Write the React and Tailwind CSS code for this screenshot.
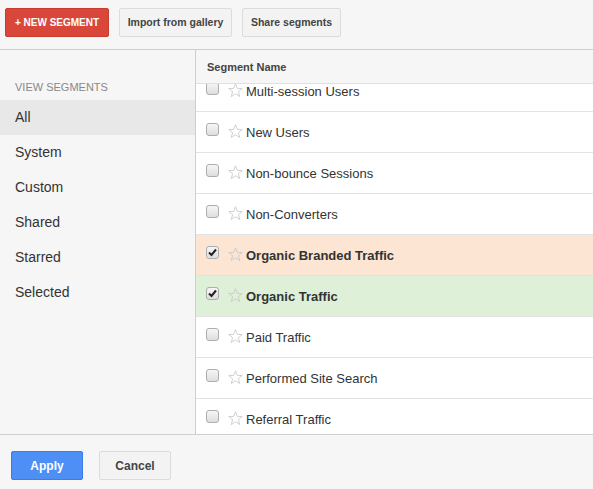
import React from "react";

const rows = [
  { name: "Multi-session Users" },
  { name: "New Users" },
  { name: "Non-bounce Sessions" },
  { name: "Non-Converters" },
  { name: "Organic Branded Traffic", checked: true, bg: "bg-[#fce6d3]" },
  { name: "Organic Traffic", checked: true, bg: "bg-[#def0d8]" },
  { name: "Paid Traffic" },
  { name: "Performed Site Search" },
  { name: "Referral Traffic" },
];

const nav = ["All", "System", "Custom", "Shared", "Starred", "Selected"];

function Checkbox({ checked }) {
  return (
    <span className="relative block w-[13px] h-[13px] rounded-[3px] border border-[#adadad] bg-gradient-to-b from-[#f6f6f6] to-[#dedede]">
      {checked && (
        <svg viewBox="0 0 13 13" className="absolute -left-px -top-px w-[13px] h-[13px]">
          <path d="M3 6.5 L5.5 9 L10 3.5" fill="none" stroke="#222" strokeWidth="2" />
        </svg>
      )}
    </span>
  );
}

function Star() {
  return (
    <svg viewBox="0 0 24 24" className="w-[17px] h-[17px]">
      <path
        d="M12 2.5 L14.6 9 L21.5 9.3 L16.1 13.6 L18 20.5 L12 16.6 L6 20.5 L7.9 13.6 L2.5 9.3 L9.4 9 Z"
        fill="none"
        stroke="#c8c8c8"
        strokeWidth="1.2"
        strokeLinejoin="round"
      />
    </svg>
  );
}

export default function App() {
  return (
    <div className="w-[593px] h-[489px] flex flex-col bg-[#f6f6f6] overflow-hidden font-['Liberation_Sans',Arial,sans-serif]">
      <div className="h-[50px] shrink-0 flex items-start pt-[8px] pl-[5px] gap-[10px] border-b border-[#cfcfcf]">
        <button className="h-[29px] w-[104px] rounded-[2px] bg-[#d9473a] border border-[#c83c2f] text-white text-[10px] font-bold">
          + NEW SEGMENT
        </button>
        <button className="h-[29px] w-[113px] rounded-[2px] bg-[#f3f3f3] border border-[#dcdcdc] text-[#444] text-[10.5px] font-bold">
          Import from gallery
        </button>
        <button className="h-[29px] w-[99px] rounded-[2px] bg-[#f3f3f3] border border-[#dcdcdc] text-[#444] text-[10.5px] font-bold">
          Share segments
        </button>
      </div>
      <div className="h-[385px] shrink-0 flex border-b border-[#cfcfcf]">
        <div className="w-[196px] shrink-0 border-r border-[#cfcfcf] pt-[31px]">
          <div className="pl-[15px] text-[11px] text-[#888] leading-[13px] mb-[6px]">VIEW SEGMENTS</div>
          {nav.map((n, i) => (
            <div
              key={n}
              className={`h-[35px] flex items-center pl-[15px] text-[14px] text-[#333] ${i === 0 ? "bg-[#e8e8e8]" : ""}`}
            >
              {n}
            </div>
          ))}
        </div>
        <div className="flex-1 flex flex-col bg-white overflow-hidden">
          <div className="h-[34px] shrink-0 bg-[#f6f6f6] border-b border-[#e0e0e0] flex items-center pt-px pl-[11px] text-[11px] font-bold text-[#444]">
            Segment Name
          </div>
          <div className="flex-1 overflow-hidden">
            <div className="-mt-[13px]">
              {rows.map((r) => (
                <div
                  key={r.name}
                  className={`h-[41px] flex items-center border-b border-[#e3e3e3] pl-[10px] ${r.bg || ""}`}
                >
                  <span className="-mt-[6px]">
                    <Checkbox checked={r.checked} />
                  </span>
                  <span className="ml-[8px] -mt-[2px]">
                    <Star />
                  </span>
                  <span className={`ml-[2px] pt-[2px] text-[13px] text-[#333] ${r.checked ? "font-bold" : ""}`}>
                    {r.name}
                  </span>
                </div>
              ))}
            </div>
          </div>
        </div>
      </div>
      <div className="flex-1 flex items-start pt-[16px] pl-[11px] gap-[16px]">
        <button className="h-[29px] w-[72px] rounded-[2px] bg-[#4d8ff5] border border-[#3a7ce8] text-white text-[12px] font-bold">
          Apply
        </button>
        <button className="h-[29px] w-[72px] rounded-[2px] bg-[#f3f3f3] border border-[#dcdcdc] text-[#444] text-[12px] font-bold">
          Cancel
        </button>
      </div>
    </div>
  );
}
